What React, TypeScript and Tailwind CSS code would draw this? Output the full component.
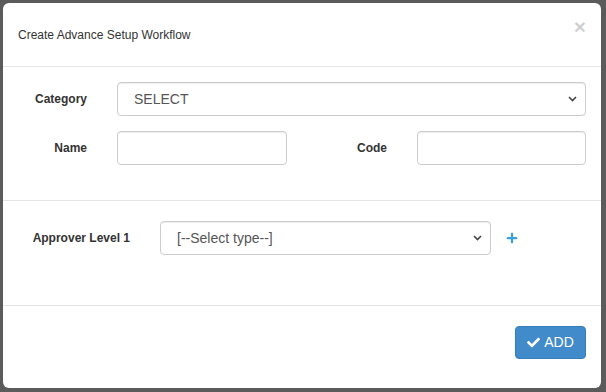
import { FaCheck, FaPlus } from "react-icons/fa";

function Chevron() {
  return (
    <svg
      className="pointer-events-none absolute right-[9px] top-1/2 -translate-y-1/2"
      width="9"
      height="6"
      viewBox="0 0 9 6"
      fill="none"
    >
      <path d="M1 1l3.5 3.5L8 1" stroke="#444" strokeWidth="1.6" />
    </svg>
  );
}

function SelectBox({ value, className }: { value: string; className: string }) {
  return (
    <div className={`relative h-[34px] ${className}`}>
      <select
        className="h-full w-full appearance-none rounded-[4px] border border-[#ccc] bg-white pl-[16px] text-[14px] text-[#555] shadow-[inset_0_1px_1px_rgba(0,0,0,0.075)] outline-none"
        defaultValue={value}
      >
        <option>{value}</option>
      </select>
      <Chevron />
    </div>
  );
}

const inputCls =
  "h-[34px] rounded-[4px] border border-[#ccc] bg-white shadow-[inset_0_1px_1px_rgba(0,0,0,0.075)] outline-none";

export default function App() {
  return (
    <div className="h-[392px] w-[606px] overflow-hidden bg-[#5b5b5b] pl-[3px] pt-[3px] font-['Liberation_Sans',Arial,sans-serif] text-[#333]">
      <div className="flex h-[385px] w-[598px] flex-col rounded-[6px] bg-white">
        <div className="flex h-[64px] justify-between border-b border-[#e5e5e5] px-[15px]">
          <h4 className="self-center text-[12px] text-[#333]">Create Advance Setup Workflow</h4>
          <button className="mt-[13px] self-start text-[21px] font-bold leading-none text-black/20">
            ×
          </button>
        </div>

        <div className="border-b border-[#e5e5e5] pb-[35px] pt-[15px]">
          <div className="flex items-center">
            <label className="w-[84px] text-right text-[12px] font-bold">Category</label>
            <SelectBox value="SELECT" className="ml-[30px] mr-[15px] flex-1" />
          </div>
          <div className="mt-[15px] flex items-center">
            <label className="w-[84px] text-right text-[12px] font-bold">Name</label>
            <input className={`${inputCls} ml-[30px] w-[170px]`} />
            <label className="w-[100px] text-right text-[12px] font-bold">Code</label>
            <input className={`${inputCls} ml-[30px] mr-[15px] min-w-0 flex-1`} />
          </div>
        </div>

        <div className="border-b border-[#e5e5e5] pb-[50px] pt-[20px]">
          <div className="flex items-center">
            <label className="w-[127px] text-right text-[12px] font-bold">Approver Level 1</label>
            <SelectBox value="[--Select type--]" className="ml-[30px] w-[331px]" />
            <FaPlus className="ml-[15px] text-[12px] text-[#3c9fdc]" />
          </div>
        </div>

        <div className="flex justify-end pr-[15px] pt-[20px]">
          <button className="flex h-[33px] w-[71px] items-center justify-center gap-[4px] rounded-[4px] border border-[#357ebd] bg-[#428bca] text-[14px] text-white">
            <FaCheck className="text-[13px]" />
            ADD
          </button>
        </div>
      </div>
    </div>
  );
}
